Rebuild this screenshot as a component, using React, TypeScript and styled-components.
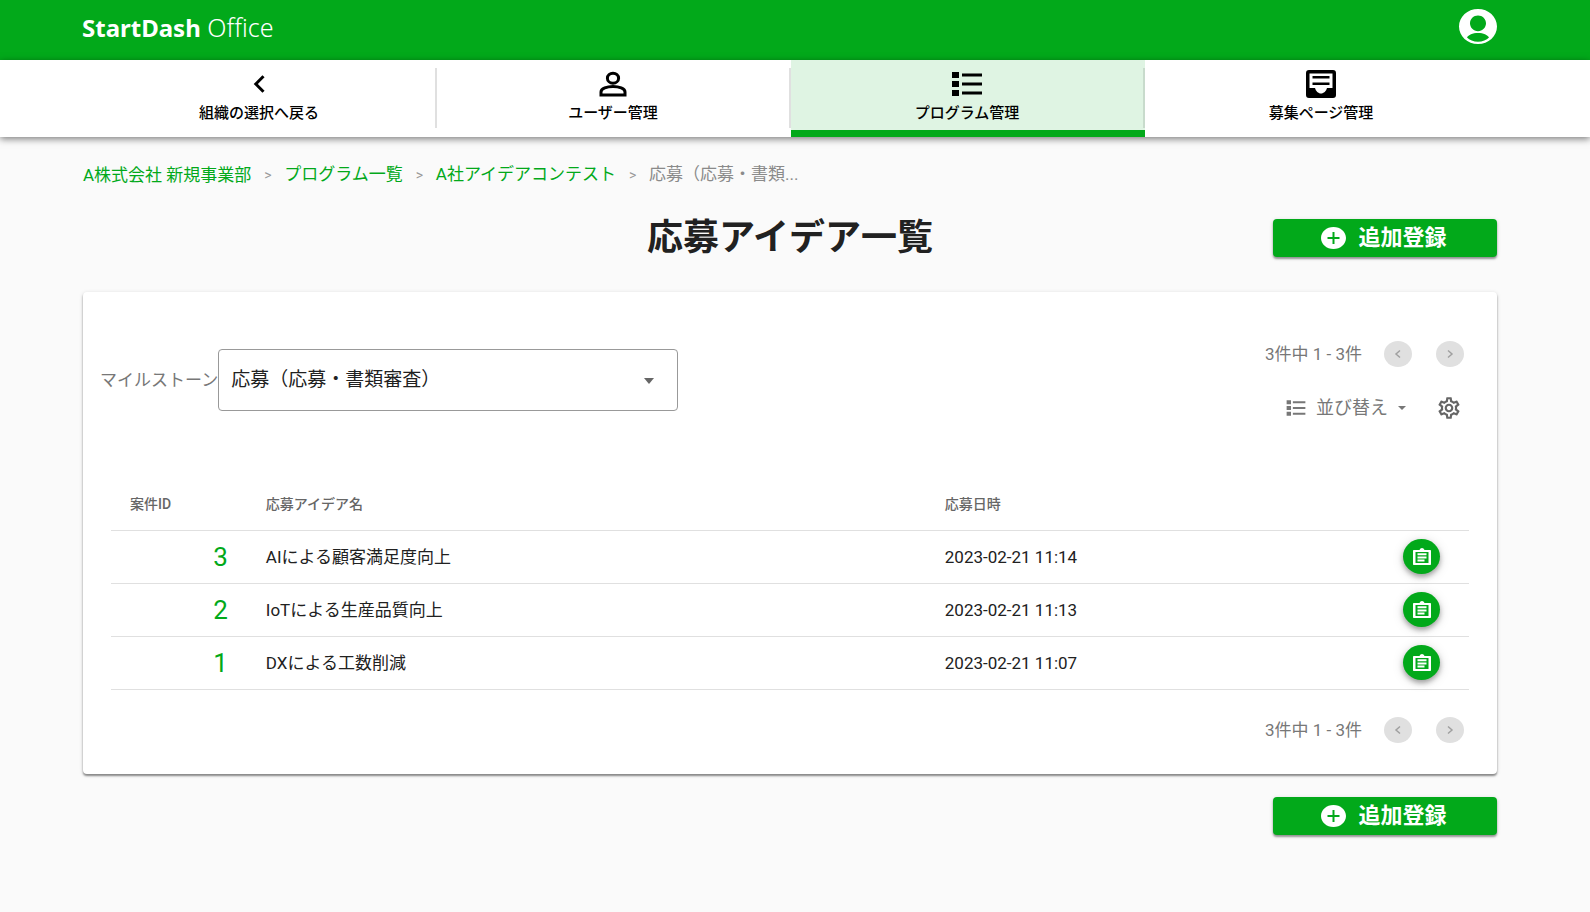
import React from "react";
import styled, { createGlobalStyle } from "styled-components";

const green = "#02a91a";
const muted = "#666666";
const line = "#e0e0e0";

const GlobalStyle = createGlobalStyle`
  *, *::before, *::after { box-sizing: border-box; }
  body {
    margin: 0;
    background: #fafafa;
    color: #212121;
    font-family: Roboto, "Noto Sans CJK JP", sans-serif;
    font-size: 17px;
    line-height: 24px;
  }
  button, select { font-family: inherit; }
`;

const Svg = styled.svg`
  display: block;
  flex: none;
  fill: currentColor;
`;

const Header = styled.header`
  display: flex;
  justify-content: space-between;
  align-items: flex-start;
  height: 60px;
  padding: 9px 93px 0 82px;
  background: ${green};
  color: #fff;
`;

const Logo = styled.a`
  color: inherit;
  text-decoration: none;
  font-family: "Noto Sans", sans-serif;
  font-size: 25px;
  line-height: 36px;
  font-weight: 300;
  white-space: nowrap;
`;

const LogoStrong = styled.strong`
  font-size: 24px;
  font-weight: 700;
`;

const IconButton = styled.button`
  display: flex;
  padding: 0;
  border: 0;
  background: none;
  color: inherit;
  cursor: pointer;
`;

const Nav = styled.nav`
  position: relative;
  display: grid;
  grid-template-columns: repeat(4, 1fr);
  padding: 0 91px 0 83px;
  background: #fff;
  box-shadow: 0 2px 7px rgba(0, 0, 0, 0.5);
`;

const NavItem = styled.a<{ $active?: boolean }>`
  position: relative;
  display: flex;
  flex-direction: column;
  align-items: center;
  gap: 5px;
  height: 77px;
  padding: 10px 2px 0 0;
  background: ${(p) => (p.$active ? "#dff4e3" : "#fff")};
  border-bottom: ${(p) => (p.$active ? `7px solid ${green}` : "0")};
  color: #000;
  text-decoration: none;
  font-size: 15px;
  line-height: 20px;
  font-weight: 500;

  &:not(:last-child)::after {
    content: "";
    position: absolute;
    right: 0;
    top: 8px;
    width: 2px;
    height: 60px;
    background: ${(p) => (p.$active ? "#c8dbcc" : line)};
  }
`;

const Main = styled.main`
  padding: 25px 93px 78px 83px;
`;

const Breadcrumb = styled.ol`
  display: flex;
  align-items: center;
  margin: 0;
  padding: 0;
  list-style: none;
  color: #8a8a8a;
`;

const Crumb = styled.li`
  white-space: nowrap;

  & + &::before {
    content: ">";
    display: inline-block;
    width: 33px;
    text-align: center;
    color: #9a9a9a;
    font-size: 14px;
  }
`;

const CrumbLink = styled.a`
  color: ${green};
  text-decoration: none;
`;

const TitleRow = styled.div`
  display: grid;
  grid-template-columns: 1fr auto 1fr;
  align-items: center;
  margin-top: 26px;
`;

const Title = styled.h1`
  grid-column: 2;
  margin: 0;
  font-size: 36px;
  line-height: 50px;
  font-weight: 700;
`;

const AddButton = styled.button`
  display: flex;
  align-items: center;
  justify-content: center;
  justify-self: end;
  gap: 12px;
  width: 224px;
  height: 38px;
  margin-left: auto;
  padding: 0 2px 0 0;
  border: 0;
  border-radius: 4px;
  background: ${green};
  color: #fff;
  font-size: 22px;
  line-height: 32px;
  font-weight: 700;
  box-shadow: 0 2px 2px rgba(0, 0, 0, 0.35), 0 1px 4px rgba(0, 0, 0, 0.15);
  cursor: pointer;
`;

const Card = styled.section`
  margin: 29px 0 23px;
  background: #fff;
  border-radius: 4px;
  box-shadow: 0 2px 2px rgba(0, 0, 0, 0.4), 0 1px 4px rgba(0, 0, 0, 0.15);
`;

const Toolbar = styled.div`
  display: flex;
  justify-content: space-between;
  align-items: flex-start;
  height: 184px;
  padding: 49px 33px 0 17px;
`;

const Milestone = styled.div`
  display: flex;
  align-items: center;
  padding-top: 8px;
  color: #777;
`;

const SelectBox = styled.div`
  position: relative;
  color: ${muted};
`;

const Select = styled.select`
  display: block;
  width: 460px;
  height: 62px;
  padding: 0 48px 2px 12px;
  appearance: none;
  border: 1px solid #999;
  border-radius: 4px;
  background: #fff;
  color: #212121;
  font-size: 19px;
`;

const SelectArrow = styled(Svg)`
  position: absolute;
  right: 24px;
  top: 29px;
  pointer-events: none;
`;

const Tools = styled.div`
  display: flex;
  flex-direction: column;
  gap: 28px;
`;

const PagerRow = styled.div`
  display: flex;
  align-items: center;
  justify-content: flex-end;
  gap: 22px;
  height: 26px;
  color: #777;
`;

const PageButtons = styled.div`
  display: flex;
  gap: 24px;
`;

const PageButton = styled.button`
  display: flex;
  align-items: center;
  justify-content: center;
  width: 28px;
  height: 26px;
  padding: 0;
  border: 0;
  border-radius: 50%;
  background: ${line};
  color: #a0a0a0;
`;

const ActionRow = styled.div`
  display: flex;
  align-items: center;
  justify-content: flex-end;
  gap: 30px;
  padding-right: 2px;
  color: ${muted};
`;

const SortButton = styled.button`
  display: flex;
  align-items: center;
  gap: 10px;
  padding: 0;
  border: 0;
  background: none;
  color: #777;
  font-size: 18px;
  line-height: 24px;
  cursor: pointer;
`;

const TableWrap = styled.div`
  padding: 0 28px;
`;

const Table = styled.table`
  width: 100%;
  table-layout: fixed;
  border-collapse: collapse;
`;

const Th = styled.th<{ $width: string }>`
  width: ${(p) => p.$width};
  height: 54px;
  padding: 2px 19px 0;
  border-bottom: 1px solid ${line};
  color: ${muted};
  font-size: 14px;
  font-weight: 500;
  text-align: left;
`;

const Td = styled.td`
  height: 53px;
  padding: 0 19px;
  border-bottom: 1px solid ${line};
`;

const ActionCell = styled.div`
  display: flex;
  align-items: center;
  justify-content: space-between;
  padding-right: 10px;
`;

const IdLink = styled.a`
  display: block;
  color: ${green};
  font-size: 26px;
  line-height: 32px;
  text-align: right;
  text-decoration: none;
`;

const RoundButton = styled.button`
  display: flex;
  align-items: center;
  justify-content: center;
  width: 37px;
  height: 35px;
  padding: 0;
  border: 0;
  border-radius: 50%;
  background: ${green};
  color: #fff;
  box-shadow: 0 3px 5px rgba(0, 0, 0, 0.3), 0 2px 12px rgba(0, 0, 0, 0.15);
  cursor: pointer;
`;

const CardFooter = styled.div`
  padding: 27px 33px 31px;
`;

const BackIcon = () => (
  <Svg width="32" height="28" viewBox="0 0 32 28">
    <path d="M20.500 6.200 12.800 14l7.700 7.800" fill="none" stroke="currentColor" strokeWidth="3" />
  </Svg>
);

const PersonIcon = () => (
  <Svg width="32" height="28" viewBox="0 0 32 28">
    <ellipse cx="16" cy="8.200" rx="5.600" ry="5" fill="none" stroke="currentColor" strokeWidth="3" />
    <path d="M4 25v-3c0-3.500 6-5.600 12-5.600s12 2.100 12 5.600v3z" fill="none" stroke="currentColor" strokeWidth="3" />
  </Svg>
);

const ListIcon = ({ width = 32, height = 28 }: { width?: number; height?: number }) => (
  <Svg width={width} height={height} viewBox="0 0 32 28" preserveAspectRatio="none">
    <path d="M1 2h7v6H1zM1 11h7v6H1zM1 20h7v6H1zM11 3.500h20v3H11zM11 12.500h20v3H11zM11 21.500h20v3H11z" />
  </Svg>
);

const PostIcon = () => (
  <Svg width="32" height="28" viewBox="0 0 32 28">
    <path
      fillRule="evenodd"
      d="M4 0h24a3 3 0 0 1 3 3v22a3 3 0 0 1-3 3H4a3 3 0 0 1-3-3V3a3 3 0 0 1 3-3zM4.500 3.500V18H10c.8 3 3.200 5.500 6 5.500s5.200-2.500 6-5.500h5.500V3.500z"
    />
    <path d="M7.500 6h17v2.500h-17zM7.500 12.500h17V15h-17z" />
  </Svg>
);

const AccountIcon = () => (
  <Svg width="38" height="35" viewBox="0 0 38 35">
    <path
      fillRule="evenodd"
      d="M19 0C29.500 0 38 7.800 38 17.500S29.500 35 19 35 0 27.200 0 17.500 8.500 0 19 0zM19 6.500c-4.500 0-8 3.500-8 7.800s3.500 7.900 8 7.900 8-3.600 8-7.900-3.500-7.800-8-7.800zM8 28.500c2.500 2.600 6.500 4.200 11 4.200s8.500-1.600 11-4.200c-1.500-2.600-5.500-4.500-11-4.500S9.500 25.900 8 28.500z"
    />
  </Svg>
);

const PlusIcon = () => (
  <Svg width="25" height="22" viewBox="0 0 25 22">
    <path
      fillRule="evenodd"
      d="M12.500 0C19.400 0 25 4.900 25 11s-5.600 11-12.500 11S0 17.100 0 11 5.600 0 12.500 0zM11.500 5v5H6.500v2h5v5h2v-5h5v-2h-5V5z"
    />
  </Svg>
);

const DropIcon = () => (
  <Svg width="8" height="4" viewBox="0 0 8 4">
    <path d="M0 0h8L4 4z" />
  </Svg>
);

const ChevronIcon = ({ right }: { right?: boolean }) => (
  <Svg width="8" height="10" viewBox="0 0 8 10">
    <path
      d={right ? "M2 1.500 6 5 2 8.500" : "M6 1.500 2 5l4 3.500"}
      fill="none"
      stroke="currentColor"
      strokeWidth="1.500"
    />
  </Svg>
);

const GearIcon = () => (
  <Svg width="26" height="26" viewBox="0 0 24 24">
    <path d="M19.430 12.980c.040-.320.070-.640.070-.980s-.030-.660-.070-.980l2.110-1.650c.190-.150.240-.420.120-.640l-2-3.460a.5.5 0 0 0-.610-.220l-2.490 1c-.520-.400-1.080-.730-1.690-.980l-.380-2.650A.488.488 0 0 0 14 2h-4c-.250 0-.460.180-.490.420l-.380 2.650c-.610.250-1.170.590-1.690.980l-2.490-1a.5.5 0 0 0-.610.220l-2 3.460c-.130.220-.070.490.120.640l2.110 1.650c-.040.320-.070.650-.070.980s.030.660.070.980l-2.110 1.650c-.190.150-.240.420-.120.640l2 3.460c.120.220.380.300.610.220l2.490-1c.520.400 1.080.730 1.690.980l.380 2.650c.030.240.240.420.490.420h4c.250 0 .460-.180.490-.420l.380-2.650c.610-.250 1.170-.590 1.690-.980l2.490 1c.230.090.490 0 .610-.220l2-3.460a.5.5 0 0 0-.120-.640l-2.110-1.650zm-1.980-1.710c.040.310.050.520.050.730s-.020.430-.050.730l-.140 1.130.890.700 1.080.840-.700 1.210-1.270-.510-1.040-.420-.900.680c-.430.320-.840.560-1.250.730l-1.060.430-.160 1.130-.200 1.350h-1.400l-.190-1.350-.160-1.130-1.060-.430c-.430-.180-.830-.410-1.230-.710l-.910-.700-1.060.430-1.270.510-.700-1.210 1.080-.840.890-.700-.140-1.130c-.030-.310-.050-.540-.050-.740s.020-.430.050-.730l.140-1.130-.890-.700-1.080-.840.700-1.210 1.270.510 1.040.420.900-.680c.430-.320.840-.560 1.250-.730l1.060-.430.160-1.130.200-1.350h1.390l.190 1.350.160 1.130 1.060.430c.430.180.830.410 1.230.710l.910.700 1.060-.430 1.270-.510.700 1.210-1.070.850-.890.700.140 1.130zM12 8c-2.210 0-4 1.790-4 4s1.790 4 4 4 4-1.790 4-4-1.790-4-4-4zm0 6c-1.100 0-2-.900-2-2s.900-2 2-2 2 .900 2 2-.900 2-2 2z" />
  </Svg>
);

const ClipboardIcon = () => (
  <Svg width="20" height="17" viewBox="0 0 20 17">
    <path
      fillRule="evenodd"
      d="M2 2h5.500C8 .8 8.900 0 10 0s2 .8 2.500 2H18c.6 0 1 .4 1 1v13c0 .6-.4 1-1 1H2c-.6 0-1-.4-1-1V3c0-.6.4-1 1-1zM3.500 4v11h13V4zM5.500 5.300h9v1.900h-9zM5.500 8.500h9v1.900h-9zM5.500 11.600h7v1.900h-7z"
    />
  </Svg>
);

const ideas = [
  { id: 3, name: "AIによる顧客満足度向上", date: "2023-02-21 11:14" },
  { id: 2, name: "IoTによる生産品質向上", date: "2023-02-21 11:13" },
  { id: 1, name: "DXによる工数削減", date: "2023-02-21 11:07" },
];

const Pager = () => (
  <PagerRow>
    <span>3件中 1 - 3件</span>
    <PageButtons>
      <PageButton disabled aria-label="前のページ">
        <ChevronIcon />
      </PageButton>
      <PageButton disabled aria-label="次のページ">
        <ChevronIcon right />
      </PageButton>
    </PageButtons>
  </PagerRow>
);

const AddEntry = () => (
  <AddButton type="button">
    <PlusIcon />
    追加登録
  </AddButton>
);

export default function App() {
  return (
    <>
      <GlobalStyle />
      <Header>
        <Logo href="#">
          <LogoStrong>StartDash</LogoStrong> Office
        </Logo>
        <IconButton type="button" aria-label="アカウント">
          <AccountIcon />
        </IconButton>
      </Header>
      <Nav>
        <NavItem href="#organizations">
          <BackIcon />
          組織の選択へ戻る
        </NavItem>
        <NavItem href="#users">
          <PersonIcon />
          ユーザー管理
        </NavItem>
        <NavItem href="#programs" $active aria-current="page">
          <ListIcon />
          プログラム管理
        </NavItem>
        <NavItem href="#pages">
          <PostIcon />
          募集ページ管理
        </NavItem>
      </Nav>
      <Main>
        <Breadcrumb>
          <Crumb>
            <CrumbLink href="#org">A株式会社 新規事業部</CrumbLink>
          </Crumb>
          <Crumb>
            <CrumbLink href="#list">プログラム一覧</CrumbLink>
          </Crumb>
          <Crumb>
            <CrumbLink href="#contest">A社アイデアコンテスト</CrumbLink>
          </Crumb>
          <Crumb>応募（応募・書類...</Crumb>
        </Breadcrumb>
        <TitleRow>
          <Title>応募アイデア一覧</Title>
          <AddEntry />
        </TitleRow>
        <Card>
          <Toolbar>
            <Milestone>
              <label htmlFor="milestone">マイルストーン</label>
              <SelectBox>
                <Select id="milestone">
                  <option>応募（応募・書類審査）</option>
                </Select>
                <SelectArrow width="10" height="6" viewBox="0 0 10 6">
                  <path d="M0 0h10L5 6z" />
                </SelectArrow>
              </SelectBox>
            </Milestone>
            <Tools>
              <Pager />
              <ActionRow>
                <SortButton type="button">
                  <ListIcon width={20} height={18} />
                  並び替え
                  <DropIcon />
                </SortButton>
                <IconButton type="button" aria-label="設定">
                  <GearIcon />
                </IconButton>
              </ActionRow>
            </Tools>
          </Toolbar>
          <TableWrap>
            <Table>
              <thead>
                <tr>
                  <Th $width="10%">案件ID</Th>
                  <Th $width="50%">応募アイデア名</Th>
                  <Th $width="40%">応募日時</Th>
                </tr>
              </thead>
              <tbody>
                {ideas.map((idea) => (
                  <tr key={idea.id}>
                    <Td>
                      <IdLink href={`#idea-${idea.id}`}>{idea.id}</IdLink>
                    </Td>
                    <Td>{idea.name}</Td>
                    <Td>
                      <ActionCell>
                        {idea.date}
                        <RoundButton type="button" aria-label={`${idea.name}の詳細`}>
                          <ClipboardIcon />
                        </RoundButton>
                      </ActionCell>
                    </Td>
                  </tr>
                ))}
              </tbody>
            </Table>
          </TableWrap>
          <CardFooter>
            <Pager />
          </CardFooter>
        </Card>
        <AddEntry />
      </Main>
    </>
  );
}
